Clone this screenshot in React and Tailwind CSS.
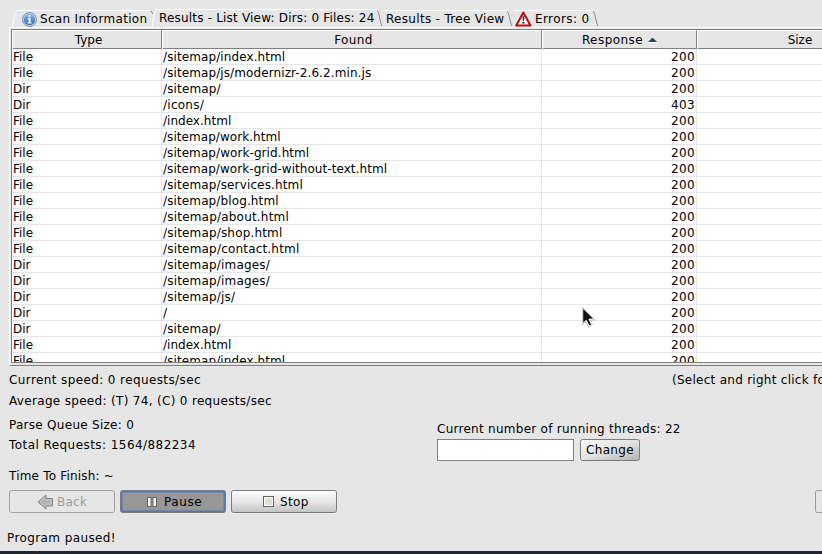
import React from "react";

const rows = [
  ["File", "/sitemap/index.html", 200, "tracking-[0.1px]"],
  ["File", "/sitemap/js/modernizr-2.6.2.min.js", 200, "tracking-[0.1px]"],
  ["Dir", "/sitemap/", 200, "tracking-[0.15px]"],
  ["Dir", "/icons/", 403, "tracking-[0.25px]"],
  ["File", "/index.html", 200, "tracking-[0.02px]"],
  ["File", "/sitemap/work.html", 200, "tracking-[0.06px]"],
  ["File", "/sitemap/work-grid.html", 200, "tracking-[0.08px]"],
  ["File", "/sitemap/work-grid-without-text.html", 200, "tracking-[0.06px]"],
  ["File", "/sitemap/services.html", 200, "tracking-[0.14px]"],
  ["File", "/sitemap/blog.html", 200, "tracking-[0.12px]"],
  ["File", "/sitemap/about.html", 200, "tracking-[0.2px]"],
  ["File", "/sitemap/shop.html", 200, "tracking-[0.17px]"],
  ["File", "/sitemap/contact.html", 200, "tracking-[0.19px]"],
  ["Dir", "/sitemap/images/", 200, "tracking-[0.18px]"],
  ["Dir", "/sitemap/images/", 200, "tracking-[0.18px]"],
  ["Dir", "/sitemap/js/", 200, "tracking-[0.17px]"],
  ["Dir", "/", 200, ""],
  ["Dir", "/sitemap/", 200, "tracking-[0.15px]"],
  ["File", "/index.html", 200, "tracking-[0.02px]"],
  ["File", "/sitemap/index.html", 200, "tracking-[0.1px]"],
];

const grid = "grid grid-cols-[150px_380px_155px_205px]";

function InfoIcon() {
  return (
    <svg width="15" height="15" viewBox="0 0 15 15" className="shrink-0">
      <defs>
        <linearGradient id="info" x1="0" y1="0" x2="0" y2="1">
          <stop offset="0" stopColor="#89b5e3" />
          <stop offset="1" stopColor="#3569a8" />
        </linearGradient>
      </defs>
      <circle cx="7.5" cy="7.5" r="6.9" fill="#dce9f6" stroke="#4678b5" strokeWidth=".9" />
      <circle cx="7.5" cy="7.5" r="5.7" fill="url(#info)" />
      <path d="M6 6H8.5V10.2H9.5V11.4H5.6V10.2H6.6V7.2H6Z" fill="#fff" />
      <rect x="6.5" y="3.1" width="2" height="1.9" fill="#fff" />
    </svg>
  );
}

function WarningIcon() {
  return (
    <svg width="17" height="16" viewBox="0 0 17 16" className="shrink-0">
      <path d="M8.3 1.5L15.5 14.5H1.2Z" fill="#f4f4f2" stroke="#b90c0c" strokeWidth="2" strokeLinejoin="round" />
      <path d="M7.4 5.2H9.4L8.9 10H7.9Z" fill="#333" />
      <rect x="7.4" y="10.9" width="2" height="1.8" fill="#333" />
    </svg>
  );
}

function TabEdge({ height }) {
  return (
    <svg width="6" height={height} viewBox={`0 0 6 ${height}`} className="shrink-0 self-end">
      <path d={`M0 1.5Q1.2 2 1.6 4L3.8 ${height - 4}L4.9 ${height - 1}`} fill="none" stroke="#808080" strokeWidth=".9" />
    </svg>
  );
}

function Cursor() {
  return (
    <svg width="14" height="21" viewBox="0 0 14 21" className="absolute left-[582px] top-[307px]">
      <path d="M.7 1V16.7L4.3 13.3L7 19L9.6 17.8L7 12.1H12Z" fill="#111" stroke="#fff" />
      <path d="M.2 .2V17.8L4 14.5L6.6 20L10.5 18L8.2 13H13Z" fill="none" stroke="#888" strokeWidth=".4" />
    </svg>
  );
}

const button = "flex h-[23px] w-[106px] shrink-0 items-center rounded-[2.5px] border";
const head = "border-l border-r border-t border-l-white border-r-[#808080] border-t-white leading-[18px]";

export default function App() {
  return (
    <div className="relative flex h-[554px] w-[822px] flex-col overflow-hidden whitespace-pre bg-[#e6e6e6] font-['DejaVu_Sans',sans-serif] text-[12px] leading-[16px] text-black">
      <nav className="flex h-[27px] shrink-0 items-end pl-[12px]">
        <svg width="6" height="17" viewBox="0 0 6 17" className="shrink-0">
          <path d="M.5 17L3 3Q3.5 .5 6 .5" fill="none" stroke="#fff" />
        </svg>
        <div className="flex h-[17px] w-[132px] items-center border-t border-white pl-[4px]">
          <InfoIcon />
          <span className="ml-[3px] tracking-[0.31px]">Scan Information</span>
        </div>
        <svg width="7" height="18" viewBox="0 0 7 18" className="shrink-0">
          <path d="M1.3 2L2.8 5" stroke="#808080" fill="none" />
          <path d="M2 18L4 5Q4.5 .5 7 .5" fill="none" stroke="#fff" />
        </svg>
        <div className="flex h-[18px] w-[220px] items-start border-t border-white pl-[2px]">
          <span className="tracking-[0.19px]">Results - List View: Dirs: 0 Files: 24</span>
        </div>
        <TabEdge height={18} />
        <div className="flex h-[17px] w-[124px] items-center border-t border-white pl-[3px]">
          <span className="tracking-[0.31px]">Results - Tree View</span>
        </div>
        <TabEdge height={17} />
        <div className="flex h-[17px] w-[80px] items-center border-t border-white pl-[2px]">
          <WarningIcon />
          <span className="ml-[3px] tracking-[0.4px]">Errors: 0</span>
        </div>
        <TabEdge height={17} />
      </nav>
      <main className="ml-[9px] h-[339px] w-[900px] shrink-0 border-b border-l border-t border-b-[#808080] border-l-white border-t-white">
        <section className="ml-px mt-px h-[334px] overflow-hidden border border-[#808080] bg-white">
          <div className={`${grid} h-[19px] border-b border-[#808080] bg-[#e6e6e6] text-center`}>
            <div className={`${head} pl-[3px]`}>Type</div>
            <div className={`${head} pl-[3px] tracking-[0.4px]`}>Found</div>
            <div className={`${head} flex items-center justify-center tracking-[0.45px]`}>
              <span>Response</span>
              <svg width="9" height="6" viewBox="0 0 9 6" className="ml-[5px]">
                <path d="M0 5L4 1H5L9 5Z" fill="#2a4364" />
                <path d="M0 5.5H9" stroke="#fff" />
              </svg>
            </div>
            <div className="border-l border-t border-white leading-[18px]">Size</div>
          </div>
          {rows.map(([type, path, code, tracking], i) => (
            <div key={i} className={`${grid} h-[16px] leading-[17px]`}>
              <div className="h-[16px] border-b border-r border-[#e6e6e6] pl-px">{type}</div>
              <div className={`h-[16px] border-b border-r border-[#e6e6e6] pl-px ${tracking}`}>{path}</div>
              <div className="h-[16px] border-b border-r border-[#e6e6e6] pr-px text-right tracking-[0.37px]">{code}</div>
              <div className="h-[16px] border-b border-[#e6e6e6]" />
            </div>
          ))}
        </section>
      </main>
      <footer className="flex h-[188px] shrink-0 flex-col">
        <div className="flex h-[110px] shrink-0">
          <div className="flex w-[428px] shrink-0 flex-col pl-[9px] pt-[6px]">
            <div className="h-[21px] tracking-[0.39px]">Current speed: 0 requests/sec</div>
            <div className="h-[24px] tracking-[0.32px]">Average speed: (T) 74, (C) 0 requests/sec</div>
            <div className="h-[20px] tracking-[0.28px]">Parse Queue Size: 0</div>
            <div className="h-[31px] tracking-[0.44px]">Total Requests: 1564/882234</div>
          </div>
          <div className="flex w-[480px] shrink-0 flex-col pl-[9px] pt-[6px]">
            <div className="h-[49px] pl-[235px] tracking-[0.27px]">(Select and right click for more options)</div>
            <div className="h-[18px] tracking-[0.27px]">Current number of running threads: 22</div>
            <div className="flex gap-[6px]">
              <input aria-label="Threads" className="h-[22px] w-[137px] border border-[#808080] bg-white outline-none" />
              <button className="flex h-[22px] w-[60px] items-center justify-center rounded-[2.5px] border border-[#7c7c7c] bg-linear-to-br from-[#fafafa] via-[#e2e2e2] to-[#b4b4b4] tracking-[0.35px]">Change</button>
            </div>
          </div>
        </div>
        <div className="-mt-[8px] h-[14px] shrink-0 pl-[9px] tracking-[0.2px]">Time To Finish: ~</div>
        <div className="mt-[8px] flex shrink-0 gap-[5px] pl-[9px]">
          <button className={`${button} border-[#a0a0a0] pl-[27px] tracking-[0.25px] text-[#9c9c9c]`}>
            <svg width="17" height="16" viewBox="0 0 17 16" className="mr-[3px]">
              <path d="M1 8L9 1V4.5H15.5V12H9V15Z" fill="#b0b0b0" stroke="#858585" />
              <path d="M3 8L8 3.8V6H14V10.2H8V12.5Z" fill="none" stroke="#c6c6c6" />
            </svg>
            Back
          </button>
          <button className={`${button} border-[#7c7c7c] bg-[#979797] pl-[25px] tracking-[0.6px] shadow-[inset_0_0_0_1.5px_#4f78b5]`}>
            <svg width="12" height="12" viewBox="0 0 12 12" className="mr-[6px]">
              <rect x="1.5" y="1.5" width="3.5" height="9" fill="#f4f4f0" stroke="#666" />
              <rect x="7" y="1.5" width="3.5" height="9" fill="#f4f4f0" stroke="#666" />
            </svg>
            Pause
          </button>
          <button className={`${button} border-[#7c7c7c] bg-linear-to-b from-[#fafafa] via-[#e8e8e8] to-[#c4c4c4] pl-[31px] tracking-[0.4px]`}>
            <svg width="11" height="11" viewBox="0 0 11 11" className="mr-[6px]">
              <rect x=".5" y=".5" width="10" height="10" fill="#fff" stroke="#666" />
              <rect x="2" y="2" width="7" height="7" fill="#e1e1dc" />
            </svg>
            Stop
          </button>
          <div className="ml-[473px] h-[23px] w-[106px] shrink-0 rounded-[2.5px] border border-[#999]" />
        </div>
        <div className="mt-auto h-[21px] shrink-0 pl-[7px] tracking-[0.4px]">Program paused!</div>
        <div className="h-[3px] shrink-0 bg-[#20242e]" />
      </footer>
      <Cursor />
    </div>
  );
}
